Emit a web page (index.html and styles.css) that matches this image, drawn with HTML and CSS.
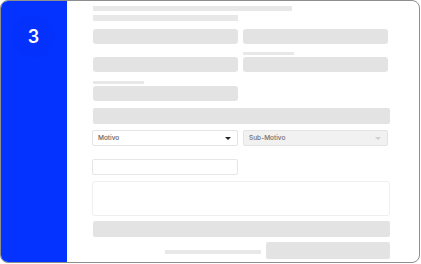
FILE: index.html
```html
<!DOCTYPE html>
<html lang="pt-BR">
<head>
  <meta charset="UTF-8" />
  <meta name="viewport" content="width=device-width, initial-scale=1.0"/>
  <title>Passo 3</title>
  <link rel="stylesheet" href="styles.css">
</head>
<body>
  <div class="quadro">
    <div class="lateral">
      <div class="passo"><span>3</span></div>
    </div>

    <div class="conteudo">
      <div class="linha linha-1"></div>
      <div class="linha linha-2"></div>

      <div class="campos">
        <div class="campo"><div class="caixa"></div></div>
        <div class="campo"><div class="caixa"></div></div>
        <div class="campo"><div class="caixa"></div></div>
        <div class="campo"><div class="rotulo"></div><div class="caixa"></div></div>
        <div class="campo"><div class="rotulo"></div><div class="caixa"></div></div>
      </div>

      <div class="barra barra-topo"></div>

      <div class="selecoes">
        <div class="selecao">
          <span>Motivo</span>
          <i class="seta"></i>
        </div>
        <div class="selecao desativada">
          <span>Sub-Motivo</span>
          <i class="seta"></i>
        </div>
      </div>

      <div class="entrada"></div>
      <div class="area-texto"></div>
      <div class="barra barra-baixo"></div>

      <div class="rodape">
        <div class="linha linha-rodape"></div>
        <div class="botao"></div>
      </div>
    </div>
  </div>
</body>
</html>
```

FILE: styles.css
```css
* {
  margin: 0; padding: 0; box-sizing: border-box;
  font-family: Inter, "Liberation Sans", Arial, sans-serif;
}
body, html {
  height: 100%;
  background: white;
}
.quadro {
  width: 420px;
  height: 263px;
  border: 1px solid #8e8e8e;
  border-radius: 8px;
  overflow: hidden;
  display: flex;
}
.lateral {
  width: 66px;
  background: #0433ff;
  flex-shrink: 0;
  padding: 15px 0 0 12px;
}
.passo {
  width: 41px;
  height: 41px;
  border-radius: 50%;
  background: #0431fb;
  display: flex;
  justify-content: center;
  align-items: center;
}
.passo span {
  color: white;
  font-size: 18px;
  font-weight: 600;
  line-height: 1;
}
.conteudo {
  width: 323px;
  padding: 5px 0 0 26px;
  display: flex;
  flex-direction: column;
}
.linha {
  background: #e8e8e8;
}
.linha-1 {
  width: 199px;
  height: 5px;
}
.linha-2 {
  width: 145px;
  height: 6px;
  margin-top: 4px;
}
.campos {
  display: grid;
  grid-template-columns: 145px 145px;
  column-gap: 5px;
  row-gap: 8px;
  align-items: end;
  margin-top: 8px;
}
.campo {
  display: flex;
  flex-direction: column;
}
.rotulo {
  width: 51px;
  height: 3px;
  margin-bottom: 2px;
  background: #e8e8e8;
}
.campo:nth-child(5) {
  margin-top: 1px;
}
.caixa {
  height: 15px;
  border-radius: 3px;
  background: #e3e3e3;
}
.barra {
  width: 297px;
  height: 16px;
  border-radius: 2px;
  background: #e3e3e3;
}
.barra-topo {
  margin-top: 7px;
}
.selecoes {
  display: flex;
  gap: 5px;
  margin-top: 6px;
  margin-left: -1px;
}
.selecao {
  width: 146px;
  height: 16px;
  border: 1px solid #e4e4e4;
  border-radius: 2px;
  background: white;
  display: flex;
  align-items: center;
  justify-content: space-between;
  padding: 0 6px 0 5px;
  font-size: 6.5px;
  font-weight: 500;
  color: #5e5e5e;
}
.selecao + .selecao {
  width: 145px;
}
.seta {
  width: 0;
  height: 0;
  border-left: 3px solid transparent;
  border-right: 3px solid transparent;
  border-top: 3px solid #222;
}
.desativada {
  background: #f1f1f1;
  color: #6e6e6e;
}
.desativada .seta {
  border-top-color: #cfcfcf;
}
.entrada {
  width: 146px;
  height: 16px;
  margin-top: 13px;
  margin-left: -1px;
  border: 1px solid #e6e6e6;
  border-radius: 2px;
}
.area-texto {
  width: 298px;
  height: 35px;
  margin-top: 6px;
  margin-left: -1px;
  border: 1px solid #efefef;
  border-radius: 3px;
}
.barra-baixo {
  margin-top: 5px;
}
.rodape {
  width: 297px;
  margin-top: 5px;
  display: flex;
  justify-content: flex-end;
  align-items: center;
  gap: 5px;
}
.linha-rodape {
  width: 96px;
  height: 4px;
  margin-top: 3px;
}
.botao {
  width: 124px;
  height: 17px;
  border-radius: 2px;
  background: #e3e3e3;
}
```
